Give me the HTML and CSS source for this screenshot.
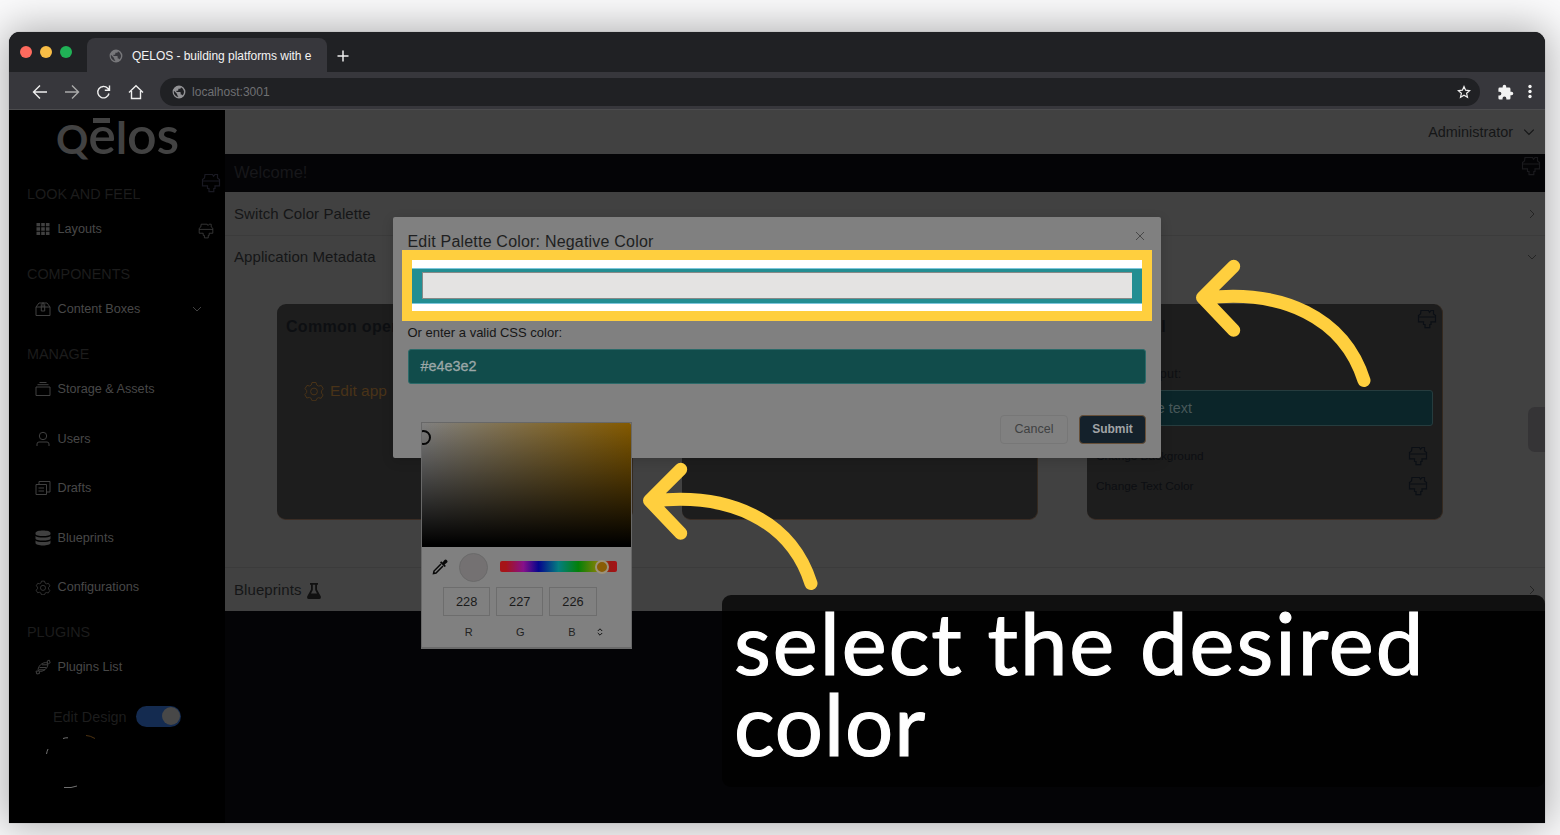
FILE: index.html
```html
<!DOCTYPE html>
<html lang="en">
<head>
<meta charset="utf-8">
<title>QELOS - building platforms</title>
<link rel="stylesheet" href="styles.css">
</head>
<body>
<svg class="defs" width="0" height="0">
  <symbol id="roller" viewBox="0 0 20 20"><path d="M4 1.500H11.500L12.500 3.200 14 1.500H16.500V5L18.500 6.500V12.800H14V15.500H12.800V18.600H8V15.500H6.500V12.800H1.500V6.500L3.500 5zM1.500 8H18.500"/></symbol>
  <symbol id="gear" viewBox="0 0 20 20"><path d="M8 1.500h4l.8 2.600 1.800 1 2.700-.6 2 3.400-1.900 2v2.100l1.700 2-2 3.300-2.700-.6-1.700 1-.7 2H8l-.8-2.300-1.700-1-2.700.6-2-3.400 1.900-2V9.500L1 7.700l2-3.300 2.600.6 1.700-1z"/><circle cx="10" cy="10.500" r="3.400"/></symbol>
  <symbol id="globe" viewBox="0 0 24 24"><path d="M12 1a11 11 0 100 22 11 11 0 000-22zm-1.500 19.700A8.800 8.800 0 013.400 10l5.300 5.300v1.100c0 1.200 1 2.200 1.800 2.200zm7.600-2.800c-.3-.9-1.100-1.500-2.100-1.500h-1.100v-3.300c0-.6-.5-1.100-1.100-1.100H7.600V9.800h2.200c.6 0 1.100-.5 1.100-1.100V6.500h2.200c1.200 0 2.200-1 2.200-2.200v-.5a8.800 8.800 0 012.800 14.100z"/></symbol>
  <symbol id="down" viewBox="0 0 10 10"><path d="M1 3l4 4 4-4"/></symbol>
  <symbol id="right" viewBox="0 0 10 10"><path d="M3 1l4 4-4 4"/></symbol>
</svg>
<div class="window">
  <div class="tabs">
    <div class="lights"><i class="red"></i><i class="amber"></i><i class="green"></i></div>
    <div class="tab"><svg width="14" height="14"><use href="#globe"/></svg><span>QELOS - building platforms with e</span></div>
    <svg class="plus" width="12" height="12"><path d="M6 .5v11M.5 6h11"/></svg>
  </div>
  <div class="toolbar">
    <svg class="nav" width="16" height="16" viewBox="0 0 16 16"><path d="M15 8H2M8 1.500L1.500 8 8 14.500"/></svg>
    <svg class="nav dim" width="16" height="16" viewBox="0 0 16 16"><path d="M1 8h13M8 1.500L14.500 8 8 14.500"/></svg>
    <svg class="nav" width="16" height="16" viewBox="0 0 16 16"><path d="M13 9.500a5.700 5.700 0 11-1.300-5.200L13.300 6M13.500 1.500V6.300H8.800"/></svg>
    <svg class="nav" width="16" height="16" viewBox="0 0 16 16"><path d="M1 8.500L8 1.800l7 6.700M3.500 7v7.500h9V7"/></svg>
    <div class="address"><svg class="site" width="14" height="14"><use href="#globe"/></svg><span>localhost:3001</span>
      <svg class="star" width="14" height="14" viewBox="0 0 14 14"><path d="M7 1.500l1.600 3.700 4 .4-3 2.700.9 4L7 10.200l-3.500 2.100.9-4-3-2.700 4-.4z"/></svg></div>
    <svg class="puzzle" width="17" height="17" viewBox="0 0 24 24"><path d="M20.500 11H19V7a2 2 0 00-2-2h-4V3.500a2.500 2.500 0 00-5 0V5H4a2 2 0 00-2 2v3.800h1.500a2.700 2.700 0 010 5.400H2V20a2 2 0 002 2h3.800v-1.500a2.700 2.700 0 015.400 0V22H17a2 2 0 002-2v-4h1.500a2.500 2.500 0 000-5z"/></svg>
    <svg class="dots" width="4" height="16"><circle cx="2" cy="2.500" r="1.700"/><circle cx="2" cy="7.500" r="1.700"/><circle cx="2" cy="12.500" r="1.700"/></svg>
  </div>
  <div class="app">
    <aside class="sidebar">
      <div class="logo"><span class="q">Q</span><span class="e">e</span><span class="l">l</span><span class="os">os</span></div>
      <div class="heading">LOOK AND FEEL<svg class="roller faint" width="20" height="20"><use href="#roller"/></svg></div>
      <div class="item"><svg class="solid" width="14" height="14" viewBox="0 0 14 14"><path d="M.5 1h3.600v3.300H.5zM5.200 1h3.600v3.300H5.200zM9.900 1h3.600v3.300H9.900zM.5 5.300h3.600v3.400H.5zM5.200 5.300h3.600v3.400H5.200zM9.900 5.300h3.600v3.400H9.900zM.5 9.700h3.600V13H.5zM5.200 9.700h3.600V13H5.200zM9.900 9.700h3.600V13H9.900z"/></svg><span>Layouts</span><svg class="tail" width="16" height="16"><use href="#roller"/></svg></div>
      <div class="heading">COMPONENTS</div>
      <div class="item"><svg width="16" height="16" viewBox="0 0 16 16"><path d="M1 6h14v8.500H1zM1 6l3-4h8l3 4M6.300 10V3.500L8 1.500l1.700 2V10zM8 2v4"/></svg><span>Content Boxes</span><svg class="chev" width="10" height="10"><use href="#down"/></svg></div>
      <div class="heading">MANAGE</div>
      <div class="item"><svg width="16" height="16" viewBox="0 0 16 16"><path d="M1 6h14v8.500H1zM2.500 3.700h11M4.500 1.500h7"/></svg><span>Storage &amp; Assets</span></div>
      <div class="item"><svg width="16" height="16" viewBox="0 0 16 16"><circle cx="8" cy="5" r="3.700"/><path d="M2 15v-2q0-2 2-2h8q2 0 2 2v2"/></svg><span>Users</span></div>
      <div class="item"><svg width="16" height="16" viewBox="0 0 16 16"><path d="M1 4.500h10.500v10H1zM4 4.500v-3h11V12h-3.500M3.500 8H9M3.500 11H9"/></svg><span>Drafts</span></div>
      <div class="item"><svg class="solid" width="16" height="16" viewBox="0 0 16 16"><path d="M.5 3c0-3.300 15-3.300 15 0v1c0 2.800-15 2.800-15 0zM.5 6c2 2 13 2 15 0v2.500c0 2.800-15 2.800-15 0zM.5 10.500c2 2 13 2 15 0V13c0 3.300-15 3.300-15 0z"/></svg><span>Blueprints</span></div>
      <div class="item"><svg width="15" height="15"><use href="#gear"/></svg><span>Configurations</span></div>
      <div class="heading">PLUGINS</div>
      <div class="item"><svg width="16" height="16" viewBox="0 0 16 16"><path d="M3.500 12C1.500 8 8 2 12.500 4c2 4-4.500 10-9 8zM3.500 12L1 12.200 1.800 15l2.700-.5-.2-2M12.500 4l-.3-2 2-.9 1 2.700-1.900.9M4.500 8.500h7M7 5.800h6M4 10.800h6"/></svg><span>Plugins List</span></div>
      <div class="design"><span>Edit Design</span><i class="switch"></i></div>
      <svg class="avatar" width="60" height="56" viewBox="0 0 60 56"><path d="M3.500 20q.5-3 1.500-5M20 4.500q3-1 5-.7M21 53.500h7l6-1.500"/><path class="spark" d="M43 1.500q4 0 9 3"/></svg>
    </aside>
    <main class="main">
      <header class="topbar"><span>Administrator</span><svg width="12" height="12" viewBox="0 0 10 10"><use href="#down"/></svg></header>
      <div class="welcome"><span>Welcome!</span><svg class="roller" width="20" height="20"><use href="#roller"/></svg></div>
      <div class="row first"><span>Switch Color Palette</span><svg width="10" height="10"><use href="#right"/></svg></div>
      <div class="row second"><span>Application Metadata</span><svg width="10" height="10"><use href="#down"/></svg></div>
      <div class="cards">
        <section class="card"><h3>Common operations</h3><div class="edit"><svg width="20" height="20"><use href="#gear"/></svg><span>Edit app</span></div></section>
        <section class="card"></section>
        <section class="card">
          <div class="cardhead"><h3>Personal</h3><svg class="roller" width="20" height="20"><use href="#roller"/></svg></div>
          <p class="label">Example input:</p>
          <div class="field">Sample text</div>
          <div class="setting"><span>Change Background</span><svg class="roller" width="20" height="20"><use href="#roller"/></svg></div>
          <div class="setting"><span>Change Text Color</span><svg class="roller" width="20" height="20"><use href="#roller"/></svg></div>
        </section>
      </div>
      <div class="row last"><span>Blueprints</span><svg class="flask" width="14" height="16" viewBox="0 0 14 16"><path d="M3 0h8v1.800h-1v4.700l3.700 6.800Q14.500 16 12 16H2Q-.5 16 .3 13.300L4 6.500V1.800H3zM5.800 1.800V7L4 10.500h6L8.200 7V1.800z"/></svg><svg width="10" height="10"><use href="#right"/></svg></div>
      <div class="sidetab"></div>
    </main>
  </div>
</div>

<div class="modal">
  <div class="modalhead"><span>Edit Palette Color: Negative Color</span><svg width="10" height="10"><path d="M1 1l8 8M9 1L1 9"/></svg></div>
  <div class="highlight"><div class="well"><div class="swatch"></div></div></div>
  <p class="hint">Or enter a valid CSS color:</p>
  <div class="hex">#e4e3e2</div>
  <div class="actions"><div class="btn cancel">Cancel</div><div class="btn submit">Submit</div></div>
</div>

<div class="picker">
  <div class="shade"><i class="ring"></i></div>
  <div class="tools">
    <svg class="dropper" width="16" height="16" viewBox="0 0 16 16"><path class="line" d="M9 5L2 12l-.5 2.500L4 14l7-7"/><path class="fill" d="M8 3.500l1.200-1.200 1.300 1.200 2-2.500q1.200-1 2.400.2t.2 2.400l-2.500 2 1.300 1.300L12.700 8z"/></svg>
    <i class="preview"></i>
    <div class="hue"><i class="thumb"></i></div>
  </div>
  <div class="values"><span>228</span><span>227</span><span>226</span></div>
  <div class="names"><span>R</span><span>G</span><span>B</span><svg width="6" height="8"><path d="M.8 3L3 .8 5.200 3M.8 5L3 7.200 5.200 5"/></svg></div>
</div>

<svg class="arrow one" width="186" height="146"><path d="M44.700 16.300L13.500 47.500 44.700 80.300M16 48C93 39 155 67 175 130.500"/></svg>
<svg class="arrow two" width="186" height="146"><path d="M44.700 16.300L13.500 47.500 44.700 80.300M16 48C93 39 155 67 175 130.500"/></svg>
<div class="caption"><div>select the desired</div><div class="second">color</div></div>
</body>
</html>
```
FILE: styles.css
```css
* { box-sizing: border-box; }
body { margin: 0; width: 1560px; height: 835px; overflow: hidden; position: relative; background: #fafafb; font-family: "Liberation Sans", Arial, sans-serif; font-size: 14.4px; }
svg { fill: none; stroke: currentColor; flex: none; }
p, h3 { margin: 0; }
i { display: block; }
.defs { position: absolute; }
.window { width: 1536px; height: 791px; margin: 32px 0 0 9px; border-radius: 11px 11px 0 0; overflow: hidden; background: #040406; position: absolute; box-shadow: 0 0 40px 4px rgba(0,0,0,.3), 0 0 1px #777; }

.tabs { height: 40px; background: #202124; display: flex; padding-left: 11px; }
.lights { display: flex; gap: 8px; padding-top: 14px; width: 67px; }
.lights i { width: 12px; height: 12px; border-radius: 50%; }
.red { background: #fe6a5e; }
.amber { background: #f8bd46; }
.green { background: #20b256; }
.tab { width: 240px; height: 34px; margin-top: 6px; border-radius: 8px 8px 0 0; background: #37373c; color: #f3f3f3; display: flex; align-items: center; gap: 9px; padding: 1px 0 0 22px; font-size: 12px; letter-spacing: -.04px; white-space: nowrap; }
.tab svg { fill: #77777a; stroke: none; }
.plus { color: #eee; stroke-width: 1.5; margin: 18px 0 0 10px; }
.toolbar { height: 38px; background: #37373c; border-bottom: 1px solid #4c4c4e; display: flex; align-items: center; gap: 16px; padding: 3px 0 0 23px; }
.nav { color: #eee; stroke-width: 1.4; }
.dim { color: #aaa; }
.address { width: 1320px; height: 28px; border-radius: 14px; background: #202124; display: flex; align-items: center; padding: 0 9px 0 12px; color: #6f7073; font-size: 12px; letter-spacing: .02px; }
.site { fill: #929295; stroke: none; margin-right: 6px; }
.star { color: #eee; stroke-width: 1.2; margin-left: auto; }
.puzzle { fill: #f3f3f3; stroke: none; margin-left: 1px; }
.dots { fill: #f3f3f3; stroke: none; margin-left: -2px; }

.app { display: flex; height: 713px; }
.sidebar { width: 216px; flex: none; background: #000; color: #404040; }
.logo { height: 63.75px; padding-left: 47px; display: flex; align-items: baseline; font-family: Lato, sans-serif; font-weight: 700; line-height: 48px; color: #424242; }
.q { font-size: 40px; }
.e { font-size: 52px; position: relative; font-weight: 600; }
.e::before { content: ""; position: absolute; left: 5px; top: 8px; width: 17px; height: 4.5px; background: #424242; }
.l { font-size: 44px; }
.os { font-size: 52px; font-weight: 600; }
.heading { height: 30.5px; padding: 8px 4px 0 18px; font-size: 14.4px; line-height: 24px; color: #1c1c1c; display: flex; justify-content: space-between; }
.faint { margin-top: -9px; }
.item { height: 49.5px; display: flex; align-items: center; padding: 0 12px 0 26px; font-size: 12.65px; }
.item > svg { width: 16px; }
.item > span { margin-left: 6.500px; color: #484848; }
.solid { fill: #404040; stroke: none; }
.item > .tail { margin: 4px -1px 0 auto; }
.item > .chev { width: 10px; margin: 0 11px 0 auto; }
.design { height: 49.500px; display: flex; align-items: center; padding-left: 44px; color: #1d1d1d; gap: 9px; }
.switch { width: 45px; height: 21px; border-radius: 11px; background: #142b50; padding: 1px 1px 1px 26px; }
.switch::before { content: ""; display: block; width: 18px; height: 18px; border-radius: 50%; background: #484848; }
.avatar { display: block; margin: -7px 0 0 34px; color: #707070; }
.spark { stroke: #4d3210; }

.main { flex: 1; min-width: 0; position: relative; color: #151617; font-size: 15px; }
.topbar { height: 44px; background: #414141; display: flex; align-items: center; justify-content: flex-end; gap: 10px; padding-right: 10px; font-size: 14.4px; }
.welcome { height: 38px; padding: 0 5px 0 9px; display: flex; align-items: center; justify-content: space-between; color: #17171a; font-size: 16.6px; }
.welcome svg { margin: -15px -1px 0 0; }
.row { height: 44px; background: #414141; padding: 0 8px 0 9px; display: flex; align-items: center; letter-spacing: .08px; }
.row svg:last-child { margin-left: auto; color: #242424; }
.first { border-bottom: 1px solid #3b3b3b; }
.second.row { padding-bottom: 3px; }
.cards { height: 287px; padding: 24px 101px 0 52px; display: flex; gap: 49px; align-items: flex-start; background: #414141; }
.card { width: 356px; flex: none; height: 216px; border-radius: 9px; background: #1d1d1d; border-right: 1px solid #352a20; border-bottom: 1px solid #3b2d25; padding: 11px 9px; }
h3 { font-size: 16px; line-height: 24px; letter-spacing: .3px; color: #0d0f12; }
.edit { display: flex; align-items: center; gap: 6px; padding: 42px 0 0 18px; color: #493318; font-size: 15.5px; }
.roller { color: #0b0f15; stroke-width: 1.2; }
.welcome .roller { color: #1a1a1d; }
.heading .roller { color: #191922; }
.cardhead { display: flex; justify-content: space-between; margin-right: -4px; }
.cardhead svg { margin-top: -6px; }
.label { font-size: 12.5px; letter-spacing: .2px; line-height: 18px; padding-top: 26px; color: #0d0f12; }
.field { height: 36px; margin-top: 7px; border: 1px solid #263c3e; border-radius: 3px; background: #0b2529; color: #48585a; line-height: 34px; padding-left: 19px; font-size: 14.4px; }
.setting { height: 30px; display: flex; align-items: center; justify-content: space-between; padding-right: 5px; font-size: 11.800px; color: #0c0e12; }
.field + .setting { margin-top: 15px; }
.last { border-top: 1px solid #3b3b3b; }
.flask { fill: #111; stroke: none; margin: 2px 0 0 5px; }
.sidetab { position: absolute; right: 0; top: 297px; width: 17px; height: 45px; border-radius: 7px 0 0 7px; background: #353436; }

.modal { position: absolute; left: 393px; top: 217px; width: 768px; height: 241px; background: #808080; border-radius: 2px; padding: 15px 15px 0 14.500px; color: #1e1f21; box-shadow: 0 3px 12px rgba(0,0,0,.15); }
.modalhead { display: flex; justify-content: space-between; height: 17.500px; padding-right: 1px; line-height: 20px; font-size: 16px; letter-spacing: .2px; }
.modalhead svg { color: #484848; margin: -1px 0 0; }
.highlight { margin: 0 -6px 0 -5.500px; height: 71.500px; border: solid #ffcf3e; border-width: 10px; background: #fff; padding: 8px 0; position: relative; }
.well { height: 36px; background: #238e92; border-top: 1px solid #7dc6dc; border-bottom: 1px solid #7dc6dc; padding: 3.500px 10px 4px 10px; }
.swatch { height: 27px; background: #e4e3e2; border: 1px solid #878987; border-right: 0; }
.hint { font-size: 13px; line-height: 16px; padding-top: 4px; height: 28px; color: #161616; }
.hex { height: 35px; border: 1px solid #2b6a69; border-radius: 3px; background: #114c4b; color: #9ba7a7; font-size: 14.400px; line-height: 33px; padding-left: 12px; -webkit-text-stroke: .3px; }
.actions { display: flex; justify-content: flex-end; gap: 11px; padding-top: 30.500px; }
.btn { height: 29px; border-radius: 4px; line-height: 26px; text-align: center; font-size: 12.500px; border: 1px solid #777; }
.cancel { width: 68px; color: #3f4042; }
.submit { width: 67px; background: #14212b; border-color: #664f38; color: #a1a4a6; font-weight: 700; font-size: 12px; }

.picker { position: absolute; left: 421px; top: 422px; width: 211px; height: 227px; background: #808080; border: 1px solid #686868; border-bottom: 2px solid #6b6b6b; }
.shade { height: 124px; background: linear-gradient(to bottom, transparent, #000 98%), linear-gradient(to right, #808080, #845a00); overflow: hidden; position: relative; border-radius: 0 2px 0 0; }
.ring { position: absolute; left: -6px; top: 7px; width: 15px; height: 15px; border: 2px solid #070707; border-radius: 50%; }
.tools { display: flex; align-items: center; height: 40px; padding-left: 10px; }
.preview { width: 29px; height: 29px; border-radius: 50%; background: #747172; border: 1px solid #6a6a6a; margin-left: 11px; }
.dropper { color: #080808; stroke-width: 1.500; }
.fill { fill: #080808; stroke: none; }
.hue { width: 117px; height: 11px; margin: -1px 0 0 12px; border-radius: 2px; position: relative; background: linear-gradient(to right, #a61418 0 5%, #86108a 20%, #05058d 33%, #047e80 50%, #048008 67%, #7d8106 83%, #9a1814 94%, #a51217); }
.thumb { position: absolute; left: 95px; top: -1px; width: 14px; height: 14px; border-radius: 50%; border: 2px solid #9b927c; background: #895d05; }
.values { display: flex; gap: 6px; padding-left: 21px; }
.values span { width: 47.200px; height: 29px; border: 1px solid #6d6d6d; color: #1a1a1a; font-size: 12.800px; line-height: 27px; text-align: center; }
.names { display: flex; align-items: center; padding-left: 21px; height: 31px; font-size: 11px; color: #222; }
.names span { width: 51.600px; text-align: center; }
.names svg { margin-left: -1px; color: #111; }

.arrow { position: absolute; color: #ffcf3e; stroke-width: 13px; stroke-linecap: round; stroke-linejoin: round; }
.one { left: 1189px; top: 250px; }
.two { left: 636px; top: 453px; }
.caption { position: absolute; left: 722px; top: 595px; width: 823px; height: 192px; border-radius: 9px; background: rgba(0,0,0,.75); color: #fff; padding: 7px 0 0 12px; font-family: Lato, sans-serif; font-size: 85px; line-height: 81px; letter-spacing: 2px; white-space: nowrap; -webkit-text-stroke: 1.200px #fff; }
.caption .second { letter-spacing: 1px; }
```
